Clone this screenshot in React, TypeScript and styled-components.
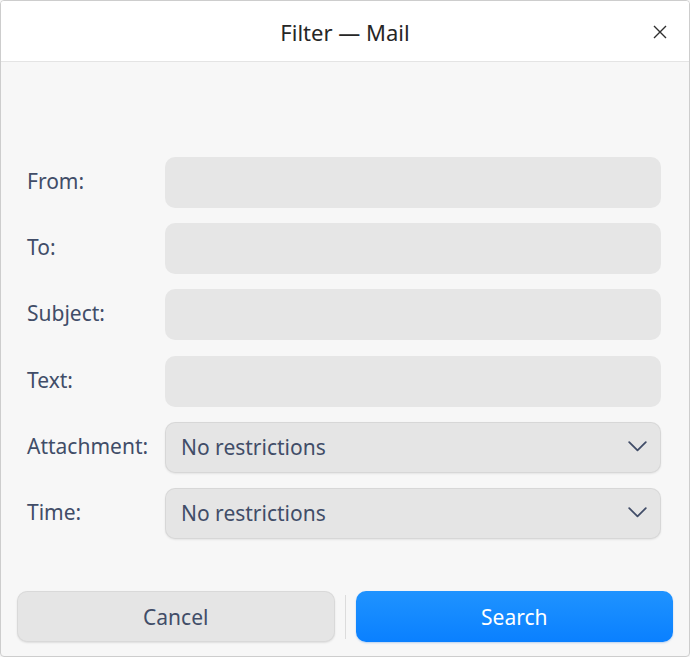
import React from "react";
import styled, {createGlobalStyle} from "styled-components";

const GlobalStyle = createGlobalStyle`
  html, body {
    margin: 0;
    padding: 0;
    background: #f7f7f7;
  }
  * {
    box-sizing: border-box;
  }
`

const fields = [
    {label: "From:"},
    {label: "To:"},
    {label: "Subject:"},
    {label: "Text:"},
    {label: "Attachment:", select: "No restrictions"},
    {label: "Time:", select: "No restrictions"},
]

const CloseIcon = () => (
    <svg width="14" height="14" viewBox="0 0 14 14">
        <path d="M1 1 L13 13 M13 1 L1 13" stroke="#2f2f2f" strokeWidth="1.4" fill="none"/>
    </svg>
)

const Chevron = () => (
    <svg width="19" height="11" viewBox="0 0 19 11">
        <path d="M1.2 1.2 L9.5 9.4 L17.8 1.2" stroke="#414d68" strokeWidth="1.8" fill="none"
              strokeLinecap="round" strokeLinejoin="round"/>
    </svg>
)

export default function App() {
    return <Window>
        <GlobalStyle/>
        <TitleBar>
            <Title>Filter — Mail</Title>
            <CloseButton aria-label="close"><CloseIcon/></CloseButton>
        </TitleBar>
        <Body>
            <Form>
                {fields.map(f =>
                    <Row key={f.label}>
                        <Label>{f.label}</Label>
                        {f.select
                            ? <Select>
                                <span>{f.select}</span>
                                <Chevron/>
                            </Select>
                            : <Input/>}
                    </Row>
                )}
            </Form>
            <Footer>
                <Button>Cancel</Button>
                <Divider/>
                <Button primary>Search</Button>
            </Footer>
        </Body>
    </Window>
}

const Window = styled.div`
  width: 690px;
  height: 657px;
  border: 1px solid #cdcdcd;
  border-radius: 4px;
  display: flex;
  flex-direction: column;
  overflow: hidden;
  font-family: "Noto Sans", "Open Sans", sans-serif;
  background: #f7f7f7;
`

const TitleBar = styled.div`
  height: 61px;
  flex-shrink: 0;
  background: #ffffff;
  border-bottom: 1px solid #e4e4e4;
  position: relative;
  display: flex;
  align-items: center;
  justify-content: center;
`

const Title = styled.div`
  font-size: 22px;
  color: #262626;
  margin-top: 1px;
`

const CloseButton = styled.div`
  position: absolute;
  right: 22px;
  top: 24px;
  width: 14px;
  height: 14px;
  display: flex;
`

const Body = styled.div`
  flex: 1;
  display: flex;
  flex-direction: column;
  padding: 95px 28px 14px 26px;
`

const Form = styled.div`
  display: flex;
  flex-direction: column;
  gap: 15.2px;
`

const Row = styled.div`
  display: flex;
  align-items: center;
  height: 51px;
`

const Label = styled.div`
  width: 138px;
  flex-shrink: 0;
  font-size: 21px;
  color: #414d68;
  margin-top: -3px;
`

const Input = styled.div`
  flex: 1;
  height: 100%;
  border-radius: 10px;
  background: #e6e6e6;
`

const Select = styled.div`
  flex: 1;
  height: 100%;
  border-radius: 10px;
  background: #e5e5e5;
  box-shadow: inset 0 0 0 1px rgba(0, 0, 0, 0.06), 0 1px 2px rgba(0, 0, 0, 0.08);
  display: flex;
  align-items: center;
  justify-content: space-between;
  padding: 0 14px 0 16px;
  font-size: 21px;
  color: #414d68;

  svg {
    margin-top: -2px;
  }
`

const Footer = styled.div`
  margin-top: auto;
  margin-left: -10px;
  margin-right: -12px;
  display: flex;
  align-items: center;
  gap: 10px;
`

const Button = styled.div<{ primary?: boolean }>`
  flex: 1;
  height: 51px;
  border-radius: 10px;
  display: flex;
  align-items: center;
  justify-content: center;
  font-size: 21px;
  color: ${p => p.primary ? "#ffffff" : "#414d68"};
  background: ${p => p.primary ? "linear-gradient(#1f93ff, #0a80ff)" : "#e5e5e5"};
  box-shadow: ${p => p.primary
          ? "0 1px 2px rgba(0, 100, 220, 0.25)"
          : "inset 0 0 0 1px rgba(0, 0, 0, 0.05), 0 1px 2px rgba(0, 0, 0, 0.1)"};
`

const Divider = styled.div`
  width: 1px;
  height: 44px;
  background: #dcdcdc;
  flex-shrink: 0;
`
